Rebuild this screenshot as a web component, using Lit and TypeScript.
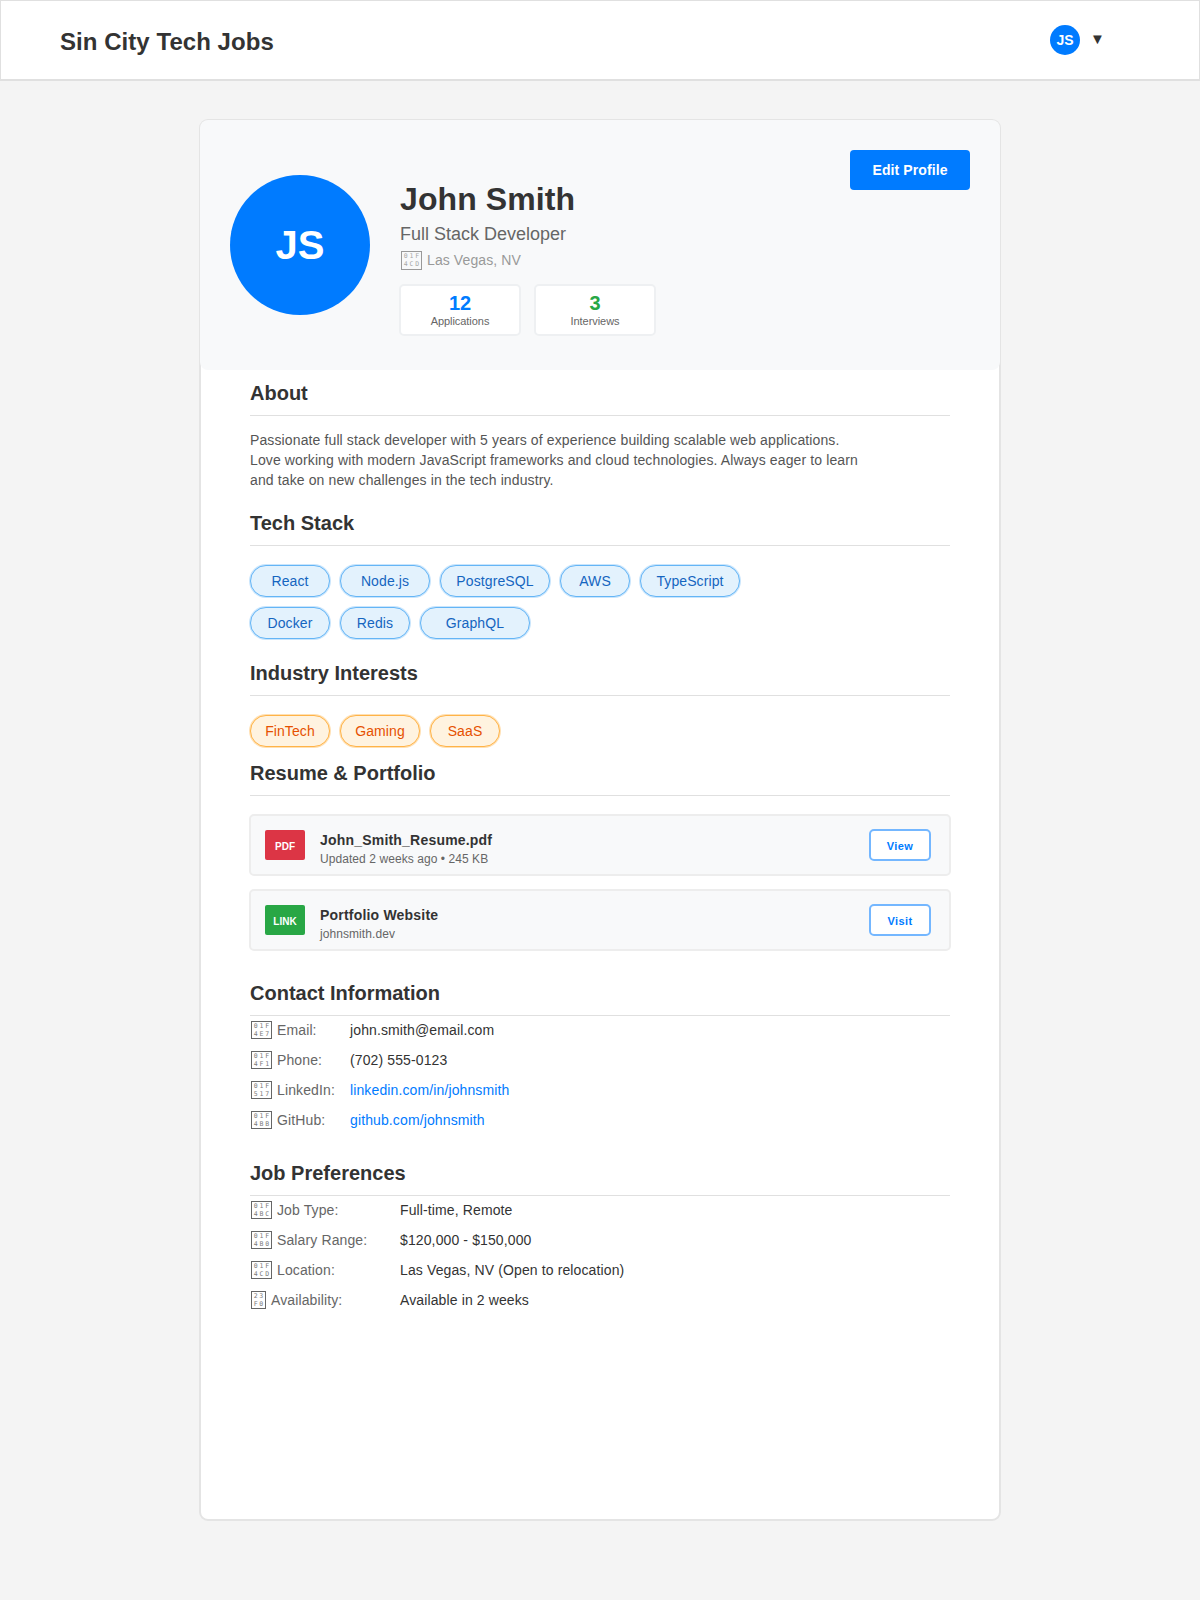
import { LitElement, html, css } from "lit";
import { customElement } from "lit/decorators.js";

const tech: [string, number][] = [
  ["React", 80], ["Node.js", 90], ["PostgreSQL", 110], ["AWS", 70], ["TypeScript", 100],
  ["Docker", 80], ["Redis", 70], ["GraphQL", 110],
];
const interests: [string, number][] = [["FinTech", 80], ["Gaming", 80], ["SaaS", 70]];

const tofu = (hex: string) => html`<span class="tofu ${hex.length === 4 ? "narrow" : ""}">${[...hex].map((c) => html`<i>${c}</i>`)}</span>`;

@customElement("app-root")
export class AppRoot extends LitElement {
  static styles = css`
    :host { display: block; min-height: 1600px; background: #f4f4f4; font-family: "Liberation Sans", Arial, sans-serif; color: #333; }
    * { box-sizing: border-box; }
    .topbar { height: 81px; background: #fff; border: 1px solid #e0e0e0; border-bottom-width: 2px; display: flex; align-items: center; justify-content: space-between; padding: 0 89px 0 59px; }
    .brand { font-size: 24px; font-weight: 700; color: #333; letter-spacing: 0.05px; padding-top: 3px; }
    .user { width: 60px; display: flex; align-items: center; }
    .mini { width: 30px; height: 30px; flex: none; border-radius: 50%; background: #007bff; color: #fff; font-size: 14px; font-weight: 700; display: flex; align-items: center; justify-content: center; }
    .caret { margin-left: 10px; font-size: 15px; color: #333; line-height: 16px; margin-top: -2px; }
    .card { width: 802px; height: 1402px; margin: 38px auto 0; background: #fff; border: 2px solid #e4e4e4; border-radius: 9px; }
    .hero { height: 250px; margin: -1px -1px 0; background: #f8f9fa; border-radius: 8px; padding: 30px; display: flex; }
    .avatar { width: 140px; height: 140px; flex: none; margin-top: 25px; border-radius: 50%; background: #007bff; color: #fff; font-size: 40px; font-weight: 700; display: flex; align-items: center; justify-content: center; }
    .info { margin-left: 30px; padding-top: 31px; flex: 1; }
    h1 { margin: 0; font-size: 32px; line-height: 37px; font-weight: 700; color: #333; letter-spacing: 0.1px; }
    .role { margin-top: 6px; font-size: 18px; line-height: 21px; color: #666; }
    .place { margin-top: 5px; height: 20px; display: flex; align-items: center; font-size: 14px; letter-spacing: 0.1px; color: #999; }
    .place .tofu { height: 19px; }
    .stats { margin: 14px 0 0 -1px; display: flex; gap: 13px; }
    .stat { width: 122px; height: 52px; background: #fff; border: 2px solid #eef0f2; border-radius: 5px; text-align: center; padding-top: 7px; }
    .num { font-size: 20px; line-height: 20px; font-weight: 700; }
    .num.blue { color: #007bff; }
    .num.green { color: #28a745; }
    .lbl { margin-top: 1px; font-size: 11px; line-height: 15px; color: #666; letter-spacing: -0.05px; }
    .edit { flex: none; width: 120px; height: 40px; border: 0; border-radius: 4px; background: #007bff; color: #fff; font: 700 14px "Liberation Sans", Arial, sans-serif; letter-spacing: 0.1px; }
    .body { padding: 0 49px; }
    h2 { margin: 0; padding-bottom: 10px; border-bottom: 1px solid #e0e0e0; font-size: 20px; line-height: 23px; font-weight: 700; color: #333; }
    .s-about { padding-top: 12px; }
    .s-tech { margin-top: 22px; }
    .s-int { margin-top: 23px; }
    .s-res { margin-top: 15px; }
    .s-con { margin-top: 31px; }
    .s-job { margin-top: 27px; }
    .about { margin: 14px 0 0; width: 615px; font-size: 14px; line-height: 20px; letter-spacing: 0.12px; color: #555; }
    .tags { margin: 19px 0 0; max-width: 510px; display: flex; flex-wrap: wrap; gap: 10px; }
    .tag { height: 32px; border-radius: 16px; font-size: 14px; letter-spacing: 0.1px; display: flex; align-items: center; justify-content: center; border: 1px solid; }
    .tag.t { background: #e3f2fd; border-color: #64b5f6; box-shadow: 0 0 0 1px rgba(100, 181, 246, 0.35); color: #1565c0; }
    .tag.i { background: #fff3e0; border-color: #ffb347; box-shadow: 0 0 0 1px rgba(255, 167, 38, 0.35); color: #e65100; }
    .files { margin: 18px -1px 0; display: flex; flex-direction: column; gap: 13px; }
    .file { height: 62px; background: #f8f9fa; border: 2px solid #ededed; border-radius: 5px; display: flex; align-items: center; padding: 0 18px 0 14px; }
    .badge { width: 40px; height: 30px; flex: none; padding-top: 3px; border-radius: 2px; color: #fff; font-size: 10px; font-weight: 700; display: flex; align-items: center; justify-content: center; }
    .badge.pdf { background: #dc3545; }
    .badge.link { background: #28a745; }
    .ftext { margin-left: 15px; padding-top: 8px; flex: 1; }
    .fname { font-size: 14px; line-height: 18px; font-weight: 700; color: #333; letter-spacing: 0.2px; }
    .fmeta { font-size: 12px; line-height: 16px; color: #666; margin-top: 2px; letter-spacing: 0.07px; }
    .btn { width: 62px; height: 32px; padding: 2px 0 0; background: #fff; border: 2px solid #74b7ff; border-radius: 5px; color: #007bff; font: 700 11px "Liberation Sans", Arial, sans-serif; letter-spacing: 0.4px; }
    .rows { margin-top: -1px; }
    .row { height: 30px; display: flex; align-items: center; font-size: 14px; letter-spacing: 0.12px; color: #333; }
    .k { color: #666; flex: none; display: flex; align-items: center; }
    .con .k { width: 100px; }
    .job .k { width: 150px; }
    .row a { color: #007bff; text-decoration: none; }
    .tofu { flex: none; width: 21px; height: 18px; margin: 0 5px 0 1px; padding: 1px 1px 0; border: 1px solid currentColor; display: grid; grid-template-columns: repeat(3, 1fr); grid-auto-rows: 7px; row-gap: 1px; font: normal 6.5px/7px "DejaVu Sans Mono", monospace; letter-spacing: 0; text-align: center; }
    .tofu.narrow { width: 15px; grid-template-columns: repeat(2, 1fr); }
    .tofu i { font-style: normal; display: block; opacity: 0.85; }
  `;

  render() {
    const tags = (list: [string, number][], c: string) => html`<div class="tags">
      ${list.map(([t, w]) => html`<span class="tag ${c}" style="width:${w}px">${t}</span>`)}
    </div>`;
    return html`
      <header class="topbar">
        <div class="brand">Sin City Tech Jobs</div>
        <div class="user"><div class="mini">JS</div><span class="caret">▼</span></div>
      </header>
      <main class="card">
        <section class="hero">
          <div class="avatar">JS</div>
          <div class="info">
            <h1>John Smith</h1>
            <div class="role">Full Stack Developer</div>
            <div class="place">${tofu("01F4CD")}Las Vegas, NV</div>
            <div class="stats">
              <div class="stat"><div class="num blue">12</div><div class="lbl">Applications</div></div>
              <div class="stat"><div class="num green">3</div><div class="lbl">Interviews</div></div>
            </div>
          </div>
          <button class="edit">Edit Profile</button>
        </section>
        <div class="body">
          <section class="s-about">
            <h2>About</h2>
            <p class="about">Passionate full stack developer with 5 years of experience building scalable web applications. Love working with modern JavaScript frameworks and cloud technologies. Always eager to learn and take on new challenges in the tech industry.</p>
          </section>
          <section class="s-tech"><h2>Tech Stack</h2>${tags(tech, "t")}</section>
          <section class="s-int"><h2>Industry Interests</h2>${tags(interests, "i")}</section>
          <section class="s-res">
            <h2>Resume &amp; Portfolio</h2>
            <div class="files">
              <div class="file">
                <div class="badge pdf">PDF</div>
                <div class="ftext"><div class="fname">John_Smith_Resume.pdf</div><div class="fmeta">Updated 2 weeks ago • 245 KB</div></div>
                <button class="btn">View</button>
              </div>
              <div class="file">
                <div class="badge link">LINK</div>
                <div class="ftext"><div class="fname">Portfolio Website</div><div class="fmeta">johnsmith.dev</div></div>
                <button class="btn">Visit</button>
              </div>
            </div>
          </section>
          <section class="s-con con">
            <h2>Contact Information</h2>
            <div class="rows">
              <div class="row"><span class="k">${tofu("01F4E7")}Email:</span><span>john.smith@email.com</span></div>
              <div class="row"><span class="k">${tofu("01F4F1")}Phone:</span><span>(702) 555-0123</span></div>
              <div class="row"><span class="k">${tofu("01F517")}LinkedIn:</span><a href="#">linkedin.com/in/johnsmith</a></div>
              <div class="row"><span class="k">${tofu("01F4BB")}GitHub:</span><a href="#">github.com/johnsmith</a></div>
            </div>
          </section>
          <section class="s-job job">
            <h2>Job Preferences</h2>
            <div class="rows">
              <div class="row"><span class="k">${tofu("01F4BC")}Job Type:</span><span>Full-time, Remote</span></div>
              <div class="row"><span class="k">${tofu("01F4B0")}Salary Range:</span><span>$120,000 - $150,000</span></div>
              <div class="row"><span class="k">${tofu("01F4CD")}Location:</span><span>Las Vegas, NV (Open to relocation)</span></div>
              <div class="row"><span class="k">${tofu("23F0")}Availability:</span><span>Available in 2 weeks</span></div>
            </div>
          </section>
        </div>
      </main>
    `;
  }
}
